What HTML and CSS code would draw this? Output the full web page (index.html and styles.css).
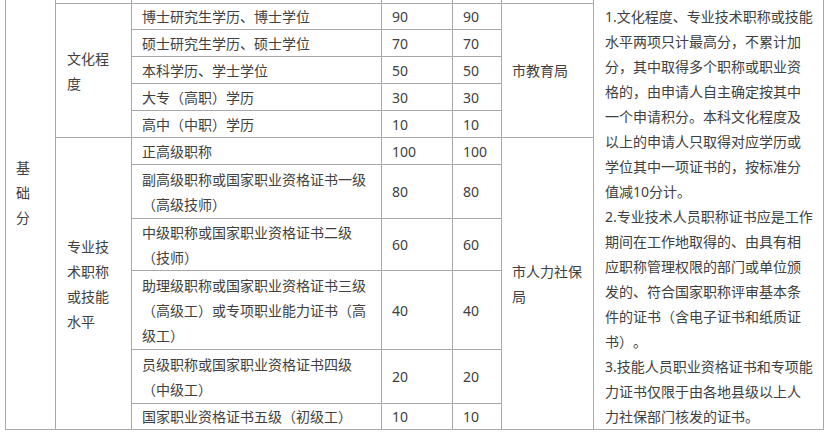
FILE: index.html
```html
<!DOCTYPE html>
<html lang="zh-CN">
<head>
<meta charset="utf-8">
<title>基础分</title>
<link rel="stylesheet" href="styles.css">
</head>
<body>
<div class="viewport">
  <table class="score">
    <colgroup>
      <col class="c1"><col class="c2"><col class="c3"><col class="c4"><col class="c5"><col class="c6"><col class="c7">
    </colgroup>
    <tbody>
      <tr class="h49">
        <td class="cat" rowspan="12">基础分</td>
        <td>&nbsp;</td><td>&nbsp;</td><td>&nbsp;</td><td>&nbsp;</td><td>&nbsp;</td>
        <td class="notes" rowspan="12">
          <p>1.文化程度、专业技术职称或技能水平两项只计最高分，不累计加分，其中取得多个职称或职业资格的，由申请人自主确定按其中一个申请积分。本科文化程度及以上的申请人只取得对应学历或学位其中一项证书的，按标准分值减10分计。</p>
          <p>2.专业技术人员职称证书应是工作期间在工作地取得的、由具有相应职称管理权限的部门或单位颁发的、符合国家职称评审基本条件的证书（含电子证书和纸质证书）。</p>
          <p>3.技能人员职业资格证书和专项能力证书仅限于由各地县级以上人力社保部门核发的证书。</p>
        </td>
      </tr>
      <tr class="h26">
        <td class="sub" rowspan="5">文化程度</td>
        <td>博士研究生学历、博士学位</td><td>90</td><td>90</td>
        <td class="dept" rowspan="5">市教育局</td>
      </tr>
      <tr class="h27"><td>硕士研究生学历、硕士学位</td><td>70</td><td>70</td></tr>
      <tr class="h27"><td>本科学历、学士学位</td><td>50</td><td>50</td></tr>
      <tr class="h27"><td>大专（高职）学历</td><td>30</td><td>30</td></tr>
      <tr class="h27"><td>高中（中职）学历</td><td>10</td><td>10</td></tr>
      <tr class="h27">
        <td class="sub" rowspan="6">专业技术职称或技能水平</td>
        <td>正高级职称</td><td>100</td><td>100</td>
        <td class="dept" rowspan="6">市人力社保局</td>
      </tr>
      <tr class="h54"><td>副高级职称或国家职业资格证书一级（高级技师）</td><td>80</td><td>80</td></tr>
      <tr class="h52"><td>中级职称或国家职业资格证书二级（技师）</td><td>60</td><td>60</td></tr>
      <tr class="h79"><td>助理级职称或国家职业资格证书三级（高级工）或专项职业能力证书（高级工）</td><td>40</td><td>40</td></tr>
      <tr class="h54"><td>员级职称或国家职业资格证书四级（中级工）</td><td>20</td><td>20</td></tr>
      <tr class="h26"><td>国家职业资格证书五级（初级工）</td><td>10</td><td>10</td></tr>
    </tbody>
  </table>
</div>
</body>
</html>
```
FILE: styles.css
```css
html, body {
  margin: 0;
  padding: 0;
  background: #ffffff;
}

.viewport {
  width: 831px;
  height: 432px;
  overflow: hidden;
  padding-left: 5px;
  box-sizing: border-box;
}

.score {
  margin-top: -46px;
  width: 818px;
  table-layout: fixed;
  border-collapse: collapse;
  font-family: "Noto Sans", "Noto Sans CJK SC", sans-serif;
  font-size: 14px;
  line-height: 25px;
  color: #404040;
  text-spacing-trim: space-all;
}

.c1 { width: 50px; }
.c2 { width: 76px; }
.c3 { width: 250px; }
.c4 { width: 71px; }
.c5 { width: 49px; }
.c6 { width: 92px; }
.c7 { width: 230px; }

.score td {
  border: 1px solid #a8a8a8;
  padding: 0 8px 0 10px;
  vertical-align: middle;
  text-align: left;
}

.score td.cat {
  padding: 0 12px 0 10px;
}

.score td.sub {
  padding: 0 11px 0 11px;
}

.score td.dept {
  padding: 0 8px 0 10px;
}

.score td.notes {
  vertical-align: bottom;
  padding: 0 9px 0 11px;
}

.notes p {
  margin: 0;
}

.h49 { height: 49px; }
.h26 { height: 26px; }
.h27 { height: 27px; }
.h52 { height: 52px; }
.h54 { height: 54px; }
.h79 { height: 79px; }
```
